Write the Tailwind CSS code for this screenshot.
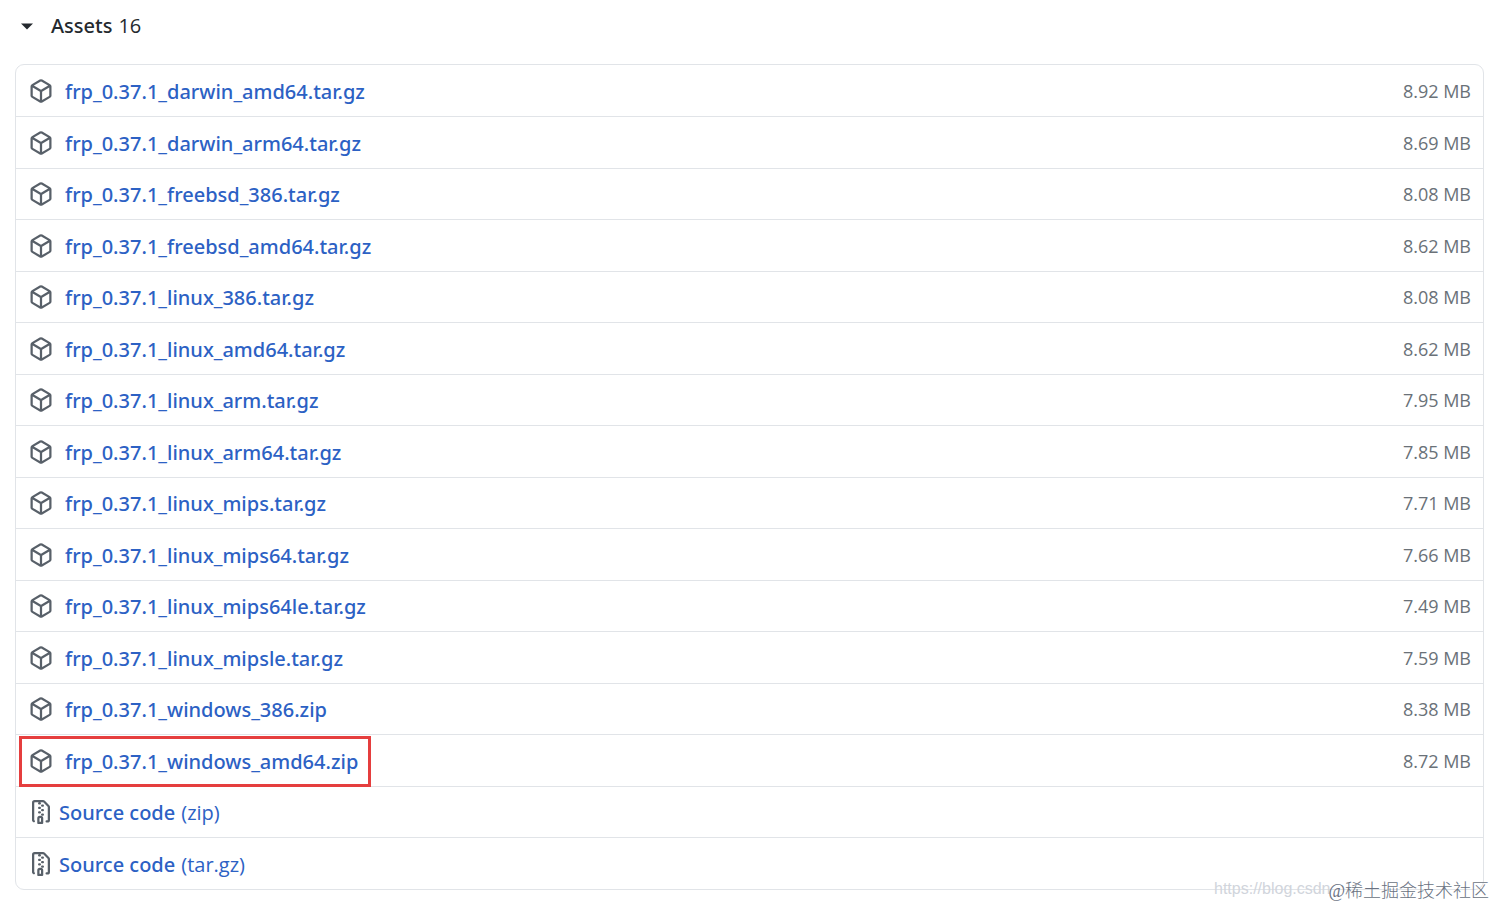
<!DOCTYPE html>
<html lang="en">
<head>
    <meta charset="UTF-8">
    <meta name="viewport" content="width=device-width, initial-scale=1.0">
    <title>Assets - frp 0.37.1</title>
    <script src="https://cdn.jsdelivr.net/npm/@tailwindcss/browser@4"></script>
</head>
<body class="relative bg-white font-['Open_Sans',sans-serif] text-[20px] leading-[30px] text-[#24292e]">

    <!-- Icons -->
    <svg class="hidden">
        <symbol id="package" viewBox="0 0 16 16">
            <path fill-rule="evenodd" d="M8.878.392a1.75 1.75 0 00-1.756 0l-5.25 3.045A1.75 1.75 0 001 4.951v6.098c0 .624.332 1.2.872 1.514l5.25 3.045a1.75 1.75 0 001.756 0l5.25-3.045c.54-.313.872-.89.872-1.514V4.951c0-.624-.332-1.2-.872-1.514L8.878.392zM7.875 1.69a.25.25 0 01.25 0l4.63 2.685L8 7.133 3.245 4.375l4.63-2.685zM2.5 5.677v5.372c0 .09.047.171.125.216l4.625 2.683V8.432L2.5 5.677zm6.25 8.271l4.625-2.683a.25.25 0 00.125-.216V5.677L8.75 8.432v5.516z"/>
        </symbol>
        <symbol id="file-zip" viewBox="0 0 16 16">
            <path fill-rule="evenodd" d="M3.5 1.75a.25.25 0 01.25-.25h3a.75.75 0 000 1.5h.5a.75.75 0 000-1.5h2.086a.25.25 0 01.177.073l2.914 2.914a.25.25 0 01.073.177v8.586a.25.25 0 01-.25.25h-.5a.75.75 0 000 1.5h.5A1.75 1.75 0 0014 13.25V4.664c0-.464-.184-.909-.513-1.237L10.573.513A1.75 1.75 0 009.336 0H3.75A1.75 1.75 0 002 1.75v11.5c0 .649.353 1.214.874 1.515a.75.75 0 10.752-1.298.25.25 0 01-.126-.217V1.75zM8.75 3a.75.75 0 000 1.5h.5a.75.75 0 000-1.5h-.5zM6 5.25a.75.75 0 01.75-.75h.5a.75.75 0 010 1.5h-.5A.75.75 0 016 5.25zm2 1.5A.75.75 0 018.75 6h.5a.75.75 0 010 1.5h-.5A.75.75 0 018 6.75zm-1.25.75a.75.75 0 000 1.5h.5a.75.75 0 000-1.5h-.5zM8 9.75A.75.75 0 018.75 9h.5a.75.75 0 010 1.5h-.5A.75.75 0 018 9.75zm-.75.75a1.75 1.75 0 00-1.75 1.75v3c0 .414.336.75.75.75h2.5a.75.75 0 00.75-.75v-3a1.75 1.75 0 00-1.75-1.75h-.5zM7 12.25a.25.25 0 01.25-.25h.5a.25.25 0 01.25.25v2.25H7v-2.25z"/>
        </symbol>
    </svg>

    <details open class="group pt-[11px] pr-[11px] pb-4 pl-[15px]">
        <summary class="flex items-center pl-[6px] cursor-pointer list-none">
            <svg class="w-3 h-3 mr-[18px] -rotate-90 group-open:rotate-0" viewBox="0 0 12 12"><path d="M0 3.5h12L6 9.5z" fill="currentColor"/></svg>
            <span class="font-['Noto_Sans',sans-serif] font-medium">Assets</span>
            <span class="ml-[6px]">16</span>
        </summary>

        <!-- Asset list -->
        <ul id="assets" class="mt-[23px] pt-px border border-[#e1e4e8] rounded-[9px] divide-y divide-[#e1e4e8]"></ul>
    </details>

    <!-- Watermark -->
    <div class="absolute top-[875px] left-[1214px] text-[16px] leading-[28px] font-['Liberation_Sans',sans-serif] text-gray-300 whitespace-nowrap">https://blog.csdn</div>
    <div class="absolute top-[877px] right-[6px] text-[18px] leading-[28px] font-['Liberation_Serif','Noto_Sans_CJK_SC',serif] font-light text-gray-500 whitespace-nowrap">@稀土掘金技术社区</div>

    <script>
        const assets = [
            ['frp_0.37.1_darwin_amd64.tar.gz', '8.92 MB'],
            ['frp_0.37.1_darwin_arm64.tar.gz', '8.69 MB'],
            ['frp_0.37.1_freebsd_386.tar.gz', '8.08 MB'],
            ['frp_0.37.1_freebsd_amd64.tar.gz', '8.62 MB'],
            ['frp_0.37.1_linux_386.tar.gz', '8.08 MB'],
            ['frp_0.37.1_linux_amd64.tar.gz', '8.62 MB'],
            ['frp_0.37.1_linux_arm.tar.gz', '7.95 MB'],
            ['frp_0.37.1_linux_arm64.tar.gz', '7.85 MB'],
            ['frp_0.37.1_linux_mips.tar.gz', '7.71 MB'],
            ['frp_0.37.1_linux_mips64.tar.gz', '7.66 MB'],
            ['frp_0.37.1_linux_mips64le.tar.gz', '7.49 MB'],
            ['frp_0.37.1_linux_mipsle.tar.gz', '7.59 MB'],
            ['frp_0.37.1_windows_386.zip', '8.38 MB'],
            ['frp_0.37.1_windows_amd64.zip', '8.72 MB'],
        ];
        const sources = ['zip', 'tar.gz'];
        const highlighted = 'frp_0.37.1_windows_amd64.zip';

        const rowClass = 'relative flex items-center justify-between odd:h-[51px] even:h-[52px] last:max-h-[51px] pl-[13px] pr-3';
        const nameClass = "pt-[2px] font-['Noto_Sans',sans-serif] font-medium";

        const assetRows = assets.map(([name, size]) => `
            <li class="${rowClass}">
                <a href="#" class="flex items-center text-[#2c61c4] hover:underline">
                    <svg class="w-6 h-6 mr-3 fill-[#586069]"><use href="#package"/></svg>
                    <span class="${nameClass}">${name}</span>
                </a>
                <span class="text-[18px] text-[#6a7178]">${size}</span>
                ${name === highlighted ? '<span class="absolute top-px left-[3px] w-[352px] h-[51px] border-3 border-[#e53e3e] pointer-events-none"></span>' : ''}
            </li>`);

        const sourceRows = sources.map((ext) => `
            <li class="${rowClass}">
                <a href="#" class="flex items-center text-[#2c61c4] hover:underline">
                    <svg class="w-6 h-6 mr-[6px] fill-[#586069]"><use href="#file-zip"/></svg>
                    <span class="${nameClass}">Source code</span>
                    <span class="pt-[2px] ml-[6px]">(${ext})</span>
                </a>
            </li>`);

        document.getElementById('assets').innerHTML = [...assetRows, ...sourceRows].join('');
    </script>
</body>
</html>
